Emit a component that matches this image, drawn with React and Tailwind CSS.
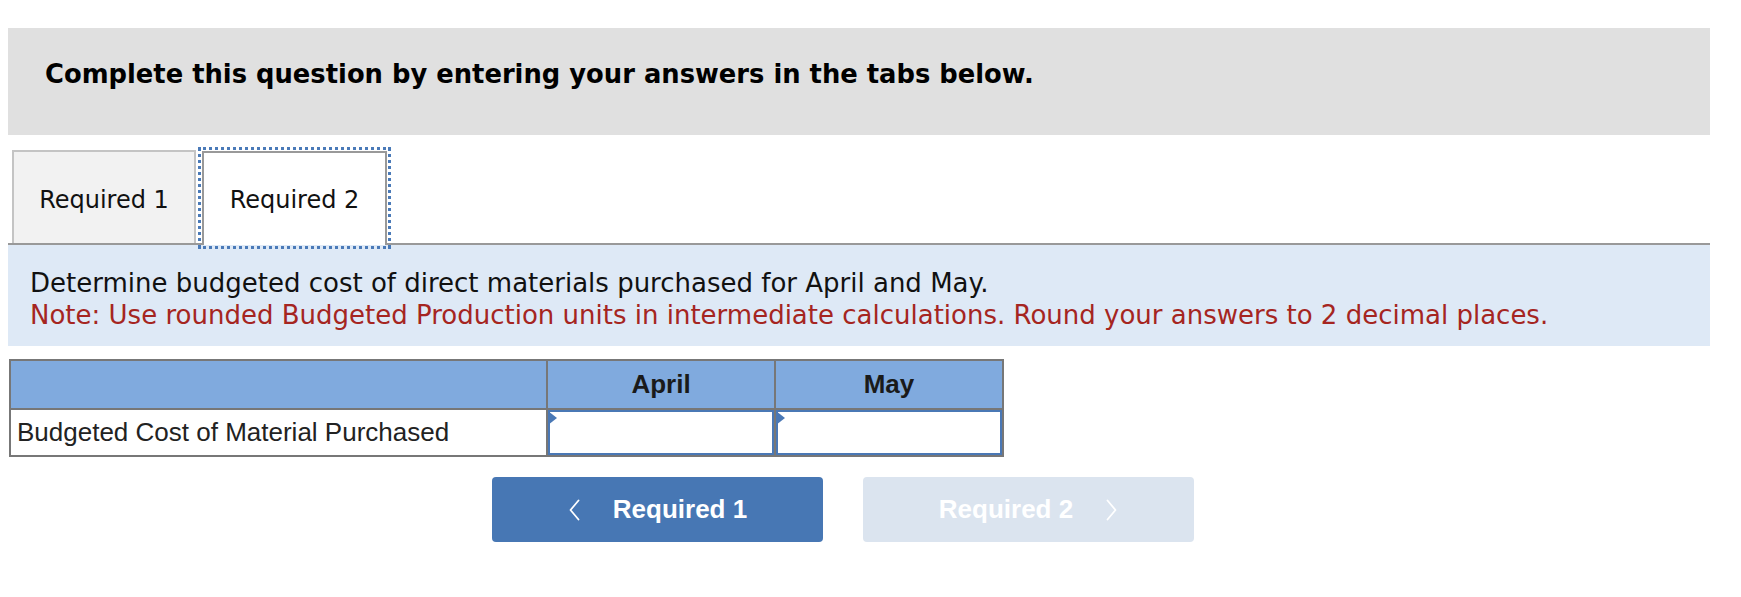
import React from "react";

const Chevron = ({ dir = "left", color = "white" }) => (
  <svg width="12" height="22" viewBox="0 0 12 22" fill="none">
    {dir === "left" ? (
      <path d="M10.5 1.5 L2.5 11 L10.5 20.5" stroke={color} strokeWidth="1.8" strokeLinecap="round" strokeLinejoin="round" />
    ) : (
      <path d="M1.5 1.5 L9.5 11 L1.5 20.5" stroke={color} strokeWidth="1.8" strokeLinecap="round" strokeLinejoin="round" />
    )}
  </svg>
);

const InputCell = () => (
  <td className="border-2 border-[#777] p-0 h-[47px] align-top">
    <div className="relative h-[45px] border-2 border-[#4a78b5] bg-white">
      <div className="absolute left-[-2px] top-[-1px] w-0 h-0 border-t-[7px] border-b-[7px] border-l-[9px] border-t-transparent border-b-transparent border-l-[#4a78b5]" />
    </div>
  </td>
);

export default function App() {
  return (
    <div className="w-[1741px] h-[597px] bg-white font-['DejaVu_Sans','Verdana',sans-serif] overflow-hidden">
      <div className="pt-[28px] pl-[8px] w-[1710px]">
        <div className="h-[107px] bg-[#e0e0e0] pl-[37px] pt-[30px]">
          <h1 className="text-[25.8px] leading-[32px] font-bold text-black">
            Complete this question by entering your answers in the tabs below.
          </h1>
        </div>

        <div className="mt-[15px] flex items-end pl-[4px] border-b-2 border-[#999] h-[95px]">
          <div className="w-[184px] h-[93px] border-2 border-b-0 border-[#c4c4c4] bg-[#f2f2f2] flex items-center justify-center text-[24px] text-[#111]">
            <span className="mt-[4px]">Required 1</span>
          </div>
          <div className="ml-[6px] w-[185px] h-[94px] -mb-[2px] border-2 border-b-0 border-[#999] bg-white flex items-center justify-center text-[24px] text-[#111] outline-dotted outline-[3px] outline-offset-[1px] outline-[#4a7ab8]">
            <span className="mt-[2px]">Required 2</span>
          </div>
        </div>

        <div className="bg-[#dee9f6] h-[101px] pl-[22px] pt-[22px] text-[26px] leading-[32px]">
          <div className="text-[#111]">Determine budgeted cost of direct materials purchased for April and May.</div>
          <div className="text-[#a52521]">Note: Use rounded Budgeted Production units in intermediate calculations. Round your answers to 2 decimal places.</div>
        </div>

        <table className="mt-[13px] ml-[1px] w-[995px] border-collapse font-['Liberation_Sans','Arial',sans-serif]">
          <thead>
            <tr className="bg-[#80aade] h-[49px]">
              <th className="border-2 border-[#777] w-[537px]"></th>
              <th className="border-2 border-[#777] w-[228px] text-[26px] font-bold text-[#1a1a1a]">April</th>
              <th className="border-2 border-[#777] text-[26px] font-bold text-[#1a1a1a]">May</th>
            </tr>
          </thead>
          <tbody>
            <tr>
              <td className="border-2 border-[#777] pl-[6px] text-[26px] text-[#222]">Budgeted Cost of Material Purchased</td>
              <InputCell />
              <InputCell />
            </tr>
          </tbody>
        </table>

        <div className="mt-[20px] flex gap-[40px] pl-[484px] font-['Liberation_Sans','Arial',sans-serif]">
          <button className="w-[331px] h-[65px] rounded-[4px] bg-[#4777b4] flex items-center justify-center gap-[33px] text-white text-[26px] font-bold">
            <Chevron dir="left" />
            <span>Required 1</span>
          </button>
          <button className="w-[331px] h-[65px] rounded-[4px] bg-[#dbe4ef] flex items-center justify-center gap-[33px] text-white text-[26px] font-bold">
            <span>Required 2</span>
            <Chevron dir="right" />
          </button>
        </div>
      </div>
    </div>
  );
}
